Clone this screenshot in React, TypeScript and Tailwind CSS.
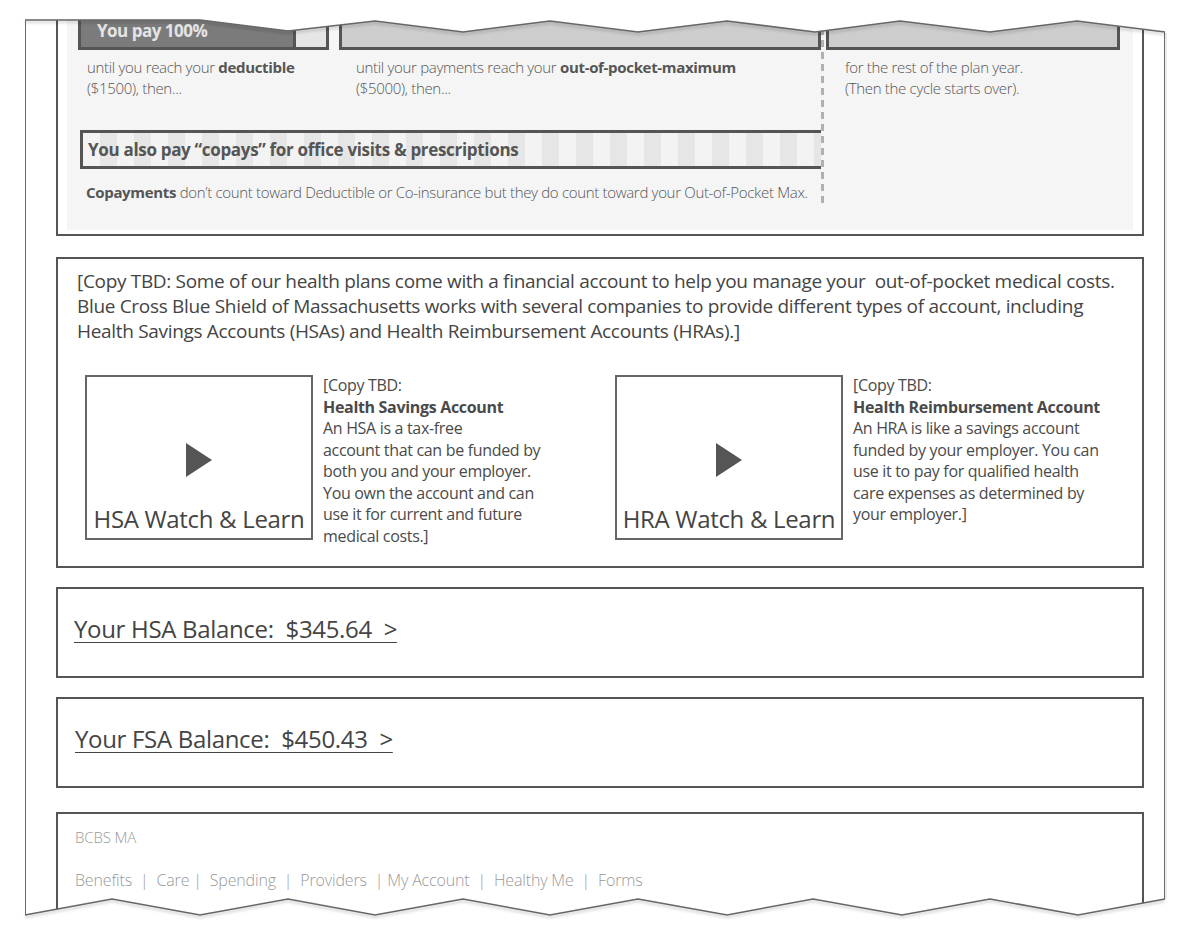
import React from 'react'

const TOP_EDGE = '25,20 200,20 288,31 375,21 463,32 550,21 638,32 727,21 815,32 900,21 990,32 1077,21 1165,32'
const BOTTOM_EDGE = '25,915 112,899 200,915 288,899 375,915 463,899 550,915 638,899 727,915 813,899 902,915 990,899 1078,915 1165,899'

function PlayIcon() {
  return (
    <svg width="26" height="34" viewBox="0 0 26 34">
      <polygon points="0,0 26,17 0,34" fill="#555" />
    </svg>
  )
}

function VideoCard({ label, lines }: { label: string; lines: React.ReactNode[] }) {
  return (
    <div className="flex items-start">
      <div className="flex h-[165px] w-[228px] shrink-0 flex-col items-center border-2 border-[#666] bg-white pt-[66px]">
        <PlayIcon />
        <p className="mt-[27px] whitespace-nowrap text-[24px] leading-[30px] text-[#444]">{label}</p>
      </div>
      <div className="ml-[10px] text-[16px] leading-[21.5px] text-[#4a4a4a]">
        {lines.map((l, i) => (
          <p key={i} className="whitespace-nowrap">{l}</p>
        ))}
      </div>
    </div>
  )
}

function BalanceBox({ text, pl, mt }: { text: string; pl: string; mt: string }) {
  return (
    <div className={`h-[91px] border-2 border-[#555] bg-white pt-[25px] ${pl} ${mt}`}>
      <a className="whitespace-pre text-[24px] leading-[30px] text-[#444] underline decoration-1 underline-offset-[4px]">
        {text}
      </a>
    </div>
  )
}

export default function App() {
  return (
    <div className="relative h-[950px] w-[1200px] overflow-hidden bg-white font-['Open_Sans','Liberation_Sans',sans-serif] tracking-[-0.02em]">
      <div className="-mt-[30px] ml-[25px] w-[1140px] border-x border-[#6b6b6b] pl-[30px] pr-[20px]">

        {/* plan cycle panel */}
        <div className="border-2 border-[#555] bg-white px-[9px] pb-[4px] pt-[8px]">
          <div className="flex bg-[#f5f5f5] pl-[11px] pr-[13px]">
            <div className="w-[743px] shrink-0 pb-[27px]">
              <div className="flex h-[70px]">
                <div className="flex w-[251px] border-x-[3px] border-b-[3px] border-[#555]">
                  <div className="flex w-[215px] items-end border-r-[3px] border-[#555] bg-[#7b7b7b] pb-[5px] pl-[16px]">
                    <span className="whitespace-nowrap text-[17px] font-bold leading-[22px] tracking-[-0.03em] text-[#e4e4e4]">You pay 100%</span>
                  </div>
                  <div className="flex-1 bg-[#e6e6e6]" />
                </div>
                <div className="ml-[10px] flex-1 border-x-[3px] border-b-[3px] border-[#555] bg-[#cdcdcd]" />
              </div>
              <div className="mt-[7px] flex text-[15px] font-light leading-[21px] text-[#555]">
                <div className="w-[261px] pl-[9px]">
                  <p>until you reach your <b className="font-bold">deductible</b></p>
                  <p>($1500), then...</p>
                </div>
                <div className="pl-[17px]">
                  <p>until your payments reach your <b className="font-bold">out-of-pocket-maximum</b></p>
                  <p>($5000), then...</p>
                </div>
              </div>
              <div className="ml-[2px] mt-[31px] flex h-[39px] items-center border-y-[3px] border-l-[3px] border-[#555] bg-[repeating-linear-gradient(90deg,#f3f3f3_0_17px,#e6e6e6_17px_34px)] pl-[5px]">
                <span className="whitespace-nowrap text-[17px] font-bold text-[#555]">You also pay “copays” for office visits &amp; prescriptions</span>
              </div>
              <p className="mt-[13px] whitespace-nowrap pl-[8px] text-[15px] font-light leading-[21px] text-[#555]">
                <b className="font-bold">Copayments</b> don’t count toward Deductible or Co-insurance but they do count toward your Out-of-Pocket Max.
              </p>
            </div>
            <div className="mb-[24px] w-[3px] shrink-0 bg-[repeating-linear-gradient(180deg,#b0b0b0_0_7px,transparent_7px_12px)]" />
            <div className="ml-[2px] flex-1">
              <div className="h-[70px] border-x-[3px] border-b-[3px] border-[#555] bg-[#cdcdcd]" />
              <div className="mt-[7px] pl-[19px] text-[15px] font-light leading-[21px] text-[#555]">
                <p>for the rest of the plan year.</p>
                <p>(Then the cycle starts over).</p>
              </div>
            </div>
          </div>
        </div>

        {/* accounts intro */}
        <div className="mt-[21px] border-2 border-[#555] bg-white pb-[19px] pl-[19px] pt-[10px]">
          <div className="text-[19px] leading-[25px] text-[#444]">
            <p className="whitespace-nowrap">[Copy TBD: Some of our health plans come with a financial account to help you manage your{'\u00a0'} out-of-pocket medical costs.</p>
            <p className="whitespace-nowrap">Blue Cross Blue Shield of Massachusetts works with several companies to provide different types of account, including</p>
            <p className="whitespace-nowrap">Health Savings Accounts (HSAs) and Health Reimbursement Accounts (HRAs).]</p>
          </div>
          <div className="ml-[8px] mt-[31px] grid grid-cols-[530px_1fr]">
            <VideoCard
              label="HSA Watch & Learn"
              lines={[
                '[Copy TBD:',
                <b key="t" className="font-bold">Health Savings Account</b>,
                'An HSA is a tax-free',
                'account that can be funded by',
                'both you and your employer.',
                'You own the account and can',
                'use it for current and future',
                'medical costs.]',
              ]}
            />
            <VideoCard
              label="HRA Watch & Learn"
              lines={[
                '[Copy TBD:',
                <b key="t" className="font-bold">Health Reimbursement Account</b>,
                'An HRA is like a savings account',
                'funded by your employer. You can',
                'use it to pay for qualified health',
                'care expenses as determined by',
                'your employer.]',
              ]}
            />
          </div>
        </div>

        <BalanceBox text="Your HSA Balance:  $345.64  >" pl="pl-[16px]" mt="mt-[19px]" />
        <BalanceBox text="Your FSA Balance:  $450.43  >" pl="pl-[17px]" mt="mt-[19px]" />

        {/* footer */}
        <div className="mt-[24px] border-x-2 border-t-2 border-[#555] bg-white pb-[60px] pl-[17px] pt-[13px] font-light tracking-[-0.01em] text-[#999]">
          <p className="text-[15px] leading-[20px]">BCBS MA</p>
          <p className="mt-[22px] whitespace-pre text-[16px] leading-[22px]">
            Benefits  |  Care |  Spending  |  Providers  | My Account  |  Healthy Me  |  Forms
          </p>
        </div>
      </div>

      {/* torn paper edges */}
      <svg className="pointer-events-none absolute inset-0" width="1200" height="950" viewBox="0 0 1200 950">
        <defs>
          <filter id="edgeShadow" x="-5%" y="-50%" width="110%" height="200%">
            <feDropShadow dx="0" dy="2" stdDeviation="1.5" floodColor="#000" floodOpacity="0.25" />
          </filter>
        </defs>
        <polygon points={`0,0 1200,0 1200,32 ${TOP_EDGE.split(' ').reverse().join(' ')} 0,20`} fill="#fff" />
        <polygon points={`0,950 1200,950 1200,899 ${BOTTOM_EDGE.split(' ').reverse().join(' ')} 0,915`} fill="#fff" />
        <polyline points={TOP_EDGE} fill="none" stroke="#666" strokeWidth="1.5" filter="url(#edgeShadow)" />
        <polyline points={BOTTOM_EDGE} fill="none" stroke="#666" strokeWidth="1.5" filter="url(#edgeShadow)" />
        <line x1="1166" y1="33" x2="1166" y2="899" stroke="#000" strokeOpacity="0.08" strokeWidth="2" />
      </svg>
    </div>
  )
}
